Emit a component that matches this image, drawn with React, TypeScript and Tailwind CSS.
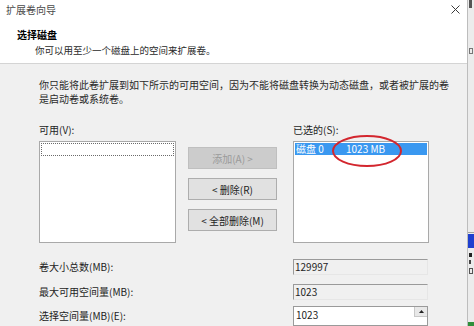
import React from "react";

const font = { fontFamily: '"Noto Sans CJK SC", "Noto Sans", sans-serif' };

export default function App() {
  return (
    <div
      className="w-[474px] h-[326px] flex overflow-hidden bg-[#f0f0f0] text-[10px] text-[#1e1e1e]"
      style={font}
    >
      <div className="w-[468px] h-[326px] flex flex-col shrink-0 border-r border-[#bdbdbd]">
        {/* title bar */}
        <div className="h-[22px] bg-white flex items-center justify-between pl-[6px] pr-[6px]">
          <span className="text-[10px] leading-[14px] text-[#4a4a4a]">扩展卷向导</span>
          <svg width="9" height="9" viewBox="0 0 9 9" className="mr-[1px]">
            <path d="M0.5 0.5 L8.5 8.5 M8.5 0.5 L0.5 8.5" stroke="#3a3a3a" strokeWidth="1" />
          </svg>
        </div>
        {/* header */}
        <div className="h-[49px] bg-white border-b border-[#d4d4d4] pl-[17px] pt-[9px]">
          <div className="font-bold leading-[14px] text-[10px] text-black">选择磁盘</div>
          <div className="pl-[18px] mt-[1px] leading-[14px] text-[9.5px] text-[#2a2a2a]">
            你可以用至少一个磁盘上的空间来扩展卷。
          </div>
        </div>
        {/* body */}
        <div className="flex-1 pl-[39px] pt-[14px]">
          <div className="leading-[14px] text-[10px] text-[#2a2a2a] whitespace-nowrap">
            你只能将此卷扩展到如下所示的可用空间，因为不能将磁盘转换为动态磁盘，或者被扩展的卷
          </div>
          <div className="leading-[14px] text-[10px] text-[#2a2a2a]">是启动卷或系统卷。</div>

          <div className="flex mt-[17px]">
            {/* left column */}
            <div className="flex flex-col w-[137px]">
              <div className="leading-[14px] h-[14px] mb-[4px]">可用(V):</div>
              <div className="h-[102px] bg-white border border-[#a9a9a9] p-[1px]">
                <div className="h-[13px] border border-dotted border-[#6a6a6a]" />
              </div>
            </div>
            {/* buttons */}
            <div className="flex flex-col w-[89px] ml-[12px] pt-[24px] gap-[9px]">
              <div className="h-[22px] bg-[#cccccc] border border-[#bfbfbf] flex items-center justify-center text-[#9a9a9a]">
                添加(A) &gt;
              </div>
              <div className="h-[22px] bg-[#e1e1e1] border border-[#adadad] flex items-center justify-center">
                &lt; 删除(R)
              </div>
              <div className="h-[22px] bg-[#e1e1e1] border border-[#adadad] flex items-center justify-center">
                &lt; 全部删除(M)
              </div>
            </div>
            {/* right column */}
            <div className="flex flex-col w-[136px] ml-[16px]">
              <div className="leading-[14px] h-[14px] mb-[4px]">已选的(S):</div>
              <div className="relative h-[102px] bg-white border border-[#a9a9a9] p-[1px]">
                <div className="h-[12px] bg-[#3a98f0] flex items-center text-white leading-[12px]">
                  <span className="w-[51px] pl-[1px]">磁盘 0</span>
                  <span>1023 MB</span>
                </div>
                <svg
                  width="72"
                  height="34"
                  viewBox="0 0 72 34"
                  className="absolute left-[37px] top-[-8px]"
                >
                  <ellipse cx="36" cy="17" rx="34" ry="15" fill="none" stroke="#d3262e" strokeWidth="2" />
                </svg>
              </div>
            </div>
          </div>

          {/* fields */}
          <div className="flex flex-col mt-[16px]">
            <div className="flex items-center h-[16px]">
              <span className="w-[254px] leading-[14px]">卷大小总数(MB):</span>
              <div className="w-[135px] h-[16px] border-t border-l border-[#9a9a9a] border-r border-b border-r-[#e6e6e6] border-b-[#e6e6e6] flex items-center pl-[1px] leading-[14px]">
                129997
              </div>
            </div>
            <div className="flex items-center h-[16px] mt-[9px]">
              <span className="w-[254px] leading-[14px]">最大可用空间量(MB):</span>
              <div className="w-[135px] h-[16px] border-t border-l border-[#9a9a9a] border-r border-b border-r-[#e6e6e6] border-b-[#e6e6e6] flex items-center pl-[1px] leading-[14px]">
                1023
              </div>
            </div>
            <div className="flex items-center h-[20px] mt-[6px]">
              <span className="w-[254px] leading-[14px]">选择空间量(MB)(E):</span>
              <div className="w-[135px] h-[20px] bg-white border border-[#9a9a9a] flex">
                <div className="flex-1 pl-[2px] pt-[1px] leading-[14px]">1023</div>
                <div className="w-[13px] h-[10px] bg-[#e8e8e8] border-l border-b border-[#c8c8c8] flex items-center justify-center">
                  <svg width="5" height="3" viewBox="0 0 5 3">
                    <path d="M2.5 0 L5 3 L0 3 Z" fill="#222" />
                  </svg>
                </div>
              </div>
            </div>
          </div>
        </div>
      </div>
      {/* sliver of another window */}
      <div className="flex-1 relative bg-[#ececec]">
        <div className="absolute left-[1px] top-0 w-[3px] h-[8px] bg-[#555]" />
        <div className="absolute left-[1px] top-[48px] w-[4px] h-[6px] border border-[#777]" />
        <div className="absolute left-0 top-[232px] w-full h-[1px] bg-[#a0a0a0]" />
        <div className="absolute left-0 top-[234px] w-full h-[14px] bg-[#1f3fcf]" />
        <div className="absolute left-[1px] top-[253px] w-[3px] h-[4px] bg-[#222]" />
        <div className="absolute left-[1px] top-[260px] w-[2px] h-[4px] bg-[#444]" />
        <div className="absolute left-[1px] top-[268px] w-[4px] h-[6px] border border-[#555]" />
        <div className="absolute left-0 bottom-0 w-full h-[4px] bg-[#2f8f3a]" />
      </div>
    </div>
  );
}
